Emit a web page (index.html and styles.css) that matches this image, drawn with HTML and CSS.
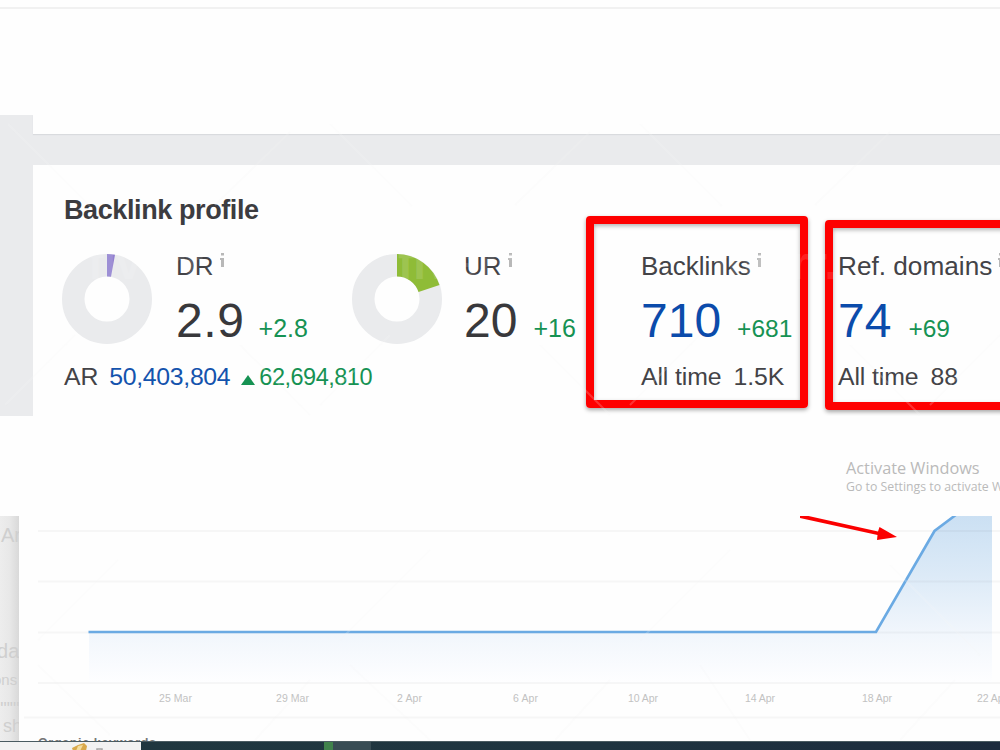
FILE: index.html
```
<!DOCTYPE html>
<html lang="en">
<head>
    <meta charset="UTF-8">
    <meta name="viewport" content="width=device-width, initial-scale=1.0">
    <title>Backlink profile</title>
    <link rel="stylesheet" href="styles.css">
</head>
<body>
    <header class="top"></header>
    <main class="page">
        <div class="card_prev"></div>
        <section class="card">
            <div class="profile">
                <h1>Backlink profile</h1>
                <div class="gauges">
                    <div class="gauge">
                        <svg class="donut" width="90" height="90" viewBox="0 0 90 90">
                            <circle cx="45" cy="45" r="33.75" fill="none" stroke="#eaebed" stroke-width="22.5"/>
                            <path d="M45 0A45 45 0 0 1 53 .7L49 22.8A22.5 22.5 0 0 0 45 22.5Z" fill="#8f7fd0"/>
                        </svg>
                        <div class="metric">
                            <div class="label">DR<svg class="info" width="4" height="14"><path d="M1 0h3v2.500H1zM0 5h4v9H1V7H0z"/></svg></div>
                            <div class="value"><span class="dec">2.9</span><span class="delta d_dr">+2.8</span></div>
                        </div>
                    </div>
                    <div class="gauge gauge_ur">
                        <svg class="donut" width="90" height="90" viewBox="0 0 90 90">
                            <circle cx="45" cy="45" r="33.75" fill="none" stroke="#eaebed" stroke-width="22.5"/>
                            <path d="M45 0A45 45 0 0 1 87.5 31L66.5 38A22.5 22.5 0 0 0 45 22.5Z" fill="#8fbc37"/>
                        </svg>
                        <div class="metric">
                            <div class="label">UR<svg class="info" width="4" height="14"><path d="M1 0h3v2.500H1zM0 5h4v9H1V7H0z"/></svg></div>
                            <div class="value">20<span class="delta d_ur">+16</span></div>
                        </div>
                    </div>
                </div>
                <div class="foot">AR<span class="rank">50,403,804</span><svg class="up" width="14" height="10"><path d="M7 0L14 10H0z"/></svg><span class="rank_delta">62,694,810</span></div>
            </div>
            <div class="box box_links">
                <div class="label">Backlinks<svg class="info" width="4" height="14"><path d="M1 0h3v2.500H1zM0 5h4v9H1V7H0z"/></svg></div>
                <div class="value blue">710<span class="delta d_links">+681</span></div>
                <div class="foot">All time<span class="total">1.5K</span></div>
            </div>
            <div class="box box_domains">
                <div class="label">Ref. domains<svg class="info" width="4" height="14"><path d="M1 0h3v2.500H1zM0 5h4v9H1V7H0z"/></svg></div>
                <div class="value blue">74<span class="delta d_domains">+69</span></div>
                <div class="foot">All time<span class="total">88</span></div>
            </div>
        </section>
    </main>
    <div class="activate">
        <p class="act_title">Activate Windows</p>
        <p class="act_text">Go to Settings to activate Windows.</p>
    </div>
    <section class="graph">
        <svg class="side" width="19" height="225">
            <defs>
                <linearGradient id="shade"><stop offset="0" stop-color="#ededed"/><stop offset=".5" stop-color="#e8e8e8"/><stop offset="1" stop-color="#d9d9d9"/></linearGradient>
            </defs>
            <rect width="19" height="225" fill="url(#shade)"/>
            <text x="1" y="26" font-size="20">Ar</text>
            <text x="-14" y="142" font-size="20">nda</text>
            <text x="-7" y="169" font-size="15">ons</text>
            <text x="-3" y="199" font-size="18">""""</text>
            <text x="3" y="216" font-size="18">sh</text>
        </svg>
        <svg class="chart" width="981" height="225" viewBox="19 516 981 225">
            <defs>
                <linearGradient id="area" gradientUnits="userSpaceOnUse" x1="0" y1="516" x2="0" y2="683">
                    <stop offset="0" stop-color="#cbe0f3"/>
                    <stop offset=".35" stop-color="#dceaf7"/>
                    <stop offset=".7" stop-color="#f1f6fc"/>
                    <stop offset="1" stop-color="#fefeff"/>
                </linearGradient>
            </defs>
            <path d="M89 632H876L934 531L956 515H992V683H89Z" fill="url(#area)"/>
            <path class="grid" d="M38 531H1000M38 581.5H1000M38 632.5H1000M38 683H1000M24 717.5H1000"/>
            <path d="M88.500 632H876L934.500 531L957 514" fill="none" stroke="#6baae3" stroke-width="2.600"/>
            <path d="M800 515L804 515L878 531.500L879.500 527L897 537L877 540L877.500 535L800 518Z" fill="#fb0000"/>
            <g class="axis">
                <text x="159" y="702" textLength="33">25 Mar</text>
                <text x="276" y="702" textLength="33">29 Mar</text>
                <text x="397" y="702" textLength="25">2 Apr</text>
                <text x="513" y="702" textLength="25">6 Apr</text>
                <text x="628" y="702" textLength="30">10 Apr</text>
                <text x="745" y="702" textLength="30">14 Apr</text>
                <text x="862" y="702" textLength="30">18 Apr</text>
                <text x="977" y="702" textLength="30">22 Apr</text>
            </g>
            <text class="keywords" x="38" y="746.5" textLength="118">Organic keywords</text>
        </svg>
    </section>
    <footer class="taskbar">
        <div class="search">
            <svg width="16" height="9"><path d="M0 6L6 3L12 1L15 4L14 9H1Z" fill="#d9a94c"/><path d="M6 4L11 3L8 9H4Z" fill="#f3dda0"/></svg>
            <svg width="9" height="9"><path d="M1 9V7H6V9" fill="none" stroke="#a5a5a5" stroke-width="1.500"/></svg>
        </div>
        <div class="app_mark"></div>
        <div class="app"></div>
    </footer>
    <!-- stock watermark -->
    <svg class="mark" width="1000" height="750">
        <g class="mark_lines">
            <path d="M8 124L90 206M330 124L412 206M640 124L722 206M290 132L215 205M590 132L515 205M890 132L815 205"/>
            <path d="M240 345L310 415M540 345L610 415M850 345L920 415M75 335L5 405M390 335L320 405M700 335L630 405M1000 335L930 405"/>
            <path d="M38 640L118 560M340 640L430 550M640 640L730 550M38 665L110 735M350 665L430 740M700 665L750 740M310 680L255 740M610 680L555 740M955 680L900 740M890 565L980 655"/>
        </g>
        <g class="mark_text">
            <text x="88" y="279">fiverr.</text>
            <text x="398" y="279">fiverr.</text>
            <text x="712" y="279">fiverr.</text>
        </g>
    </svg>
</body>
</html>
```
FILE: styles.css
```
*{
    box-sizing: border-box;
}
body{
    margin: 0;
    width: 1000px;
    height: 750px;
    overflow: hidden;
    background-color: #fefefe;
    font-family: "Liberation Sans", Arial, sans-serif;
    color: #434347;
}
.top{
    height: 115px;
    border-top: 7px solid #fefefe;
    box-shadow: inset 0 2px 0 #f1f1f1;
}
.page{
    height: 301px;
    padding-left: 33px;
    background-color: #eaebed;
    overflow: hidden;
}
.card_prev{
    height: 19px;
    margin-bottom: 31px;
    background-color: #fefefe;
    box-shadow: 0 1px 1px #d9dbde;
}
.card{
    display: flex;
    align-items: flex-start;
    height: 251px;
    background-color: #fefefe;
}
.profile{
    flex: none;
    width: 553px;
    padding: 30px 0 0 31px;
    white-space: nowrap;
}
h1{
    margin: 0 0 26px;
    font-size: 27px;
    letter-spacing: -.4px;
    line-height: 30px;
    color: #3c3c40;
}
.gauges{
    display: flex;
    height: 109px;
}
.gauge{
    display: flex;
    width: 288px;
}
.gauge_ur{
    width: 234px;
}
.donut{
    flex: none;
    margin: 3px 24px 0 -2px;
}
.gauge_ur .donut{
    margin-left: 0;
    margin-right: 22px;
}
.label{
    font-size: 26px;
    line-height: 30px;
    white-space: nowrap;
}
.info{
    margin-left: 6px;
    vertical-align: 8px;
    fill: #b8b8b8;
}
.value{
    height: 79px;
    font-size: 48px;
    line-height: 79px;
    white-space: nowrap;
    color: #38383b;
}
.dec{
    letter-spacing: .6px;
}
.blue{
    color: #0b4bab;
}
.delta{
    font-size: 25px;
    letter-spacing: 0;
    color: #169253;
}
.d_dr{
    margin-left: 14px;
}
.d_ur{
    margin-left: 16px;
}
.d_links{
    margin-left: 16px;
    font-size: 24.5px;
}
.d_domains{
    margin-left: 17px;
    font-size: 24.5px;
}
.foot{
    font-size: 24.8px;
    letter-spacing: -.1px;
    line-height: 34px;
    white-space: nowrap;
}
.rank{
    margin-left: 11px;
    letter-spacing: -.3px;
    color: #1453ad;
}
.up{
    margin: 0 4px 0 11px;
    fill: #169253;
}
.rank_delta{
    font-size: 23.5px;
    letter-spacing: -.5px;
    color: #169253;
}
.total{
    margin-left: 12px;
}
.box{
    flex: none;
    border: 8px solid #fe0000;
    border-radius: 4px;
    box-shadow: 0 2px 4px rgba(0,0,0,.35), inset 0 2px 4px rgba(0,0,0,.3);
}
.box_links{
    width: 222px;
    height: 192px;
    margin-top: 51px;
    padding: 27px 0 0 47px;
}
.box_domains{
    width: 222px;
    height: 190px;
    margin: 55px 0 0 17px;
    padding: 23px 0 0 5px;
}
.box_domains .label{
    font-size: 26.2px;
}
.activate{
    height: 100px;
    padding: 42px 0 0 846px;
    font-family: "Open Sans", "Noto Sans", sans-serif;
    color: #bababa;
    white-space: nowrap;
}
.activate p{
    margin: 0;
}
.act_title{
    font-size: 16.3px;
    line-height: 20px;
}
.act_text{
    font-size: 12.3px;
    line-height: 18px;
}
.graph{
    display: flex;
    height: 225px;
}
.side{
    fill: #cfcfcf;
}
.grid{
    fill: none;
    stroke: #000;
    stroke-opacity: .03;
    stroke-width: 2;
}
.axis{
    font-size: 10.5px;
    fill: #c2c2c2;
}
.keywords{
    font-size: 12.5px;
    font-weight: bold;
    fill: #777;
}
.taskbar{
    display: flex;
    height: 9px;
    background: linear-gradient(90deg, #20383f, #1f3440 60%, #1c2b3d);
    border-top: 1px solid #4a5b61;
}
.search{
    display: flex;
    gap: 8px;
    width: 141px;
    padding-left: 72px;
    background-color: #f2f2f2;
}
.app_mark{
    width: 9px;
    margin-left: 183px;
    background-color: #40824c;
}
.app{
    width: 38px;
    background-color: #384c54;
}
.mark{
    position: absolute;
    left: 0;
    top: 0;
    pointer-events: none;
}
.mark_lines{
    fill: none;
    stroke: #f4f4f4;
    stroke-opacity: .2;
    stroke-width: 2;
}
.mark_text{
    font-size: 46px;
    font-weight: bold;
    fill: #fff;
    fill-opacity: .14;
}
```
